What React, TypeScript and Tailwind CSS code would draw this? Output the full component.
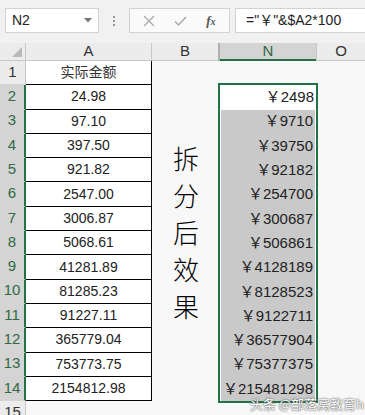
const amounts = [
  '24.98', '97.10', '397.50', '921.82', '2547.00', '3006.87', '5068.61',
  '41281.89', '81285.23', '91227.11', '365779.04', '753773.75', '2154812.98',
];

const font = { fontFamily: '"Liberation Sans", "Noto Sans CJK SC", sans-serif' };

function rowLabel(n: number) {
  const selected = n >= 2 && n <= 14;
  return (
    <div
      key={n}
      className={`h-[24.3px] flex items-end justify-center pb-[1px] text-[15px] border-b border-[#d4d4d4] ${
        selected ? 'bg-[#d4d4d4] text-[#2f6a44] border-r-2 border-r-[#217346]' : 'bg-[#ececec] text-[#333] border-r border-r-[#c8c8c8]'
      }`}
    >
      {n}
    </div>
  );
}

export default function App() {
  return (
    <div className="w-[365px] h-[415px] overflow-hidden bg-[#f8f8f8] relative" style={font}>
      {/* formula bar */}
      <div className="h-[43px] bg-[#f1f1f1] flex items-start pt-[8px] pl-[5px]">
        <div className="w-[94px] h-[25px] bg-white border border-[#d2d2d2] flex items-center justify-between pl-[6px] pr-[6px] text-[14px] text-[#222]">
          <span>N2</span>
          <svg width="8" height="5" viewBox="0 0 8 5"><path d="M0 0H8L4 4.5Z" fill="#777" /></svg>
        </div>
        <div className="w-[30px] h-[25px] flex flex-col items-center justify-center gap-[2px]">
          <span className="w-[2px] h-[2px] bg-[#999]" />
          <span className="w-[2px] h-[2px] bg-[#999]" />
          <span className="w-[2px] h-[2px] bg-[#999]" />
        </div>
        <div className="w-[101px] h-[25px] bg-[#fafafa] border border-[#d2d2d2] flex items-center justify-around px-[4px] text-[#b0b0b0]">
          <svg width="12" height="12" viewBox="0 0 12 12"><path d="M1 1L11 11M11 1L1 11" stroke="#aaa" strokeWidth="1.3" fill="none" /></svg>
          <svg width="13" height="12" viewBox="0 0 13 12"><path d="M1 6.5L4.5 10L12 2" stroke="#aaa" strokeWidth="1.5" fill="none" /></svg>
          <span className="text-[13px] italic text-[#555] font-bold" style={{ fontFamily: '"Liberation Serif", serif' }}>
            f<span className="text-[10px]">x</span>
          </span>
        </div>
        <div className="ml-[5px] flex-1 h-[25px] bg-white border border-[#d2d2d2] border-r-0 flex items-center pl-[10px] text-[14px] text-[#222] whitespace-nowrap">
          ="￥"&amp;$A2*100
        </div>
      </div>

      {/* sheet */}
      <div className="flex">
        {/* row headers */}
        <div className="w-[26px] flex flex-col">
          <div className="h-[18px] bg-[#ececec] border-b border-r border-[#c8c8c8] flex items-end justify-end pr-[3px] pb-[3px]">
            <svg width="10" height="10" viewBox="0 0 10 10"><path d="M10 0L10 10L0 10Z" fill="#b9b9b9" /></svg>
          </div>
          {Array.from({ length: 15 }, (_, i) => rowLabel(i + 1))}
        </div>

        {/* column A */}
        <div className="w-[126px] flex flex-col">
          <div className="h-[18px] bg-[#ececec] border-b border-r border-[#c8c8c8] flex items-center justify-center text-[15px] text-[#333]">A</div>
          <div className="h-[24.3px] bg-white border-r border-b border-black flex items-center justify-center text-[14px] text-[#333]">实际金额</div>
          {amounts.map((a) => (
            <div key={a} className="h-[24.3px] bg-white border-r border-b border-black flex items-center justify-center text-[14px] text-[#222]">
              {a}
            </div>
          ))}
        </div>

        {/* column B */}
        <div className="w-[66px] flex flex-col">
          <div className="h-[18px] bg-[#ececec] border-b border-[#c8c8c8] flex items-center justify-center text-[15px] text-[#333]">B</div>
          <div className="h-[340px] flex flex-col items-center justify-center pl-[2px] text-[26px] leading-[37px] font-light text-black" style={{ fontFamily: '"Noto Sans CJK SC", sans-serif' }}>
            {'拆分后效果'.split('').map((c) => (
              <span key={c}>{c}</span>
            ))}
          </div>
        </div>

        {/* hidden columns C:M */}
        <div className="w-[2px] h-[18px] bg-[#ececec] border-l border-r border-[#b0b0b0]" />

        {/* column N */}
        <div className="w-[96px] flex flex-col">
          <div className="h-[18px] bg-[#d4d4d4] border-b-2 border-[#217346] flex items-center justify-center text-[15px] text-[#2f6a44]">N</div>
          <div className="h-[24.3px]" />
          <div className="outline-2 outline-[#217346] bg-white text-[15px] text-[#222]">
            {amounts.map((a, i) => (
              <div
                key={a}
                className={`h-[24.3px] flex items-center justify-end pr-[2px] ${i === 0 ? 'bg-white' : 'bg-[#c9c9c9] mr-[1px] ml-[1px]'}`}
              >
                ￥{Math.round(parseFloat(a) * 100)}
              </div>
            ))}
          </div>
        </div>

        {/* column O */}
        <div className="flex-1 flex flex-col">
          <div className="h-[18px] bg-[#ececec] border-b border-l border-[#c8c8c8] flex items-center justify-center text-[15px] text-[#333]">O</div>
        </div>
      </div>

      {/* watermark */}
      <div
        className="absolute right-[1px] bottom-[2px] text-[13px] text-white whitespace-nowrap"
        style={{ textShadow: '0 0 2px #555, 0 0 1px #555', fontFamily: '"Noto Sans CJK SC", sans-serif' }}
      >
        头条 @部落窝教育h
      </div>
    </div>
  );
}
